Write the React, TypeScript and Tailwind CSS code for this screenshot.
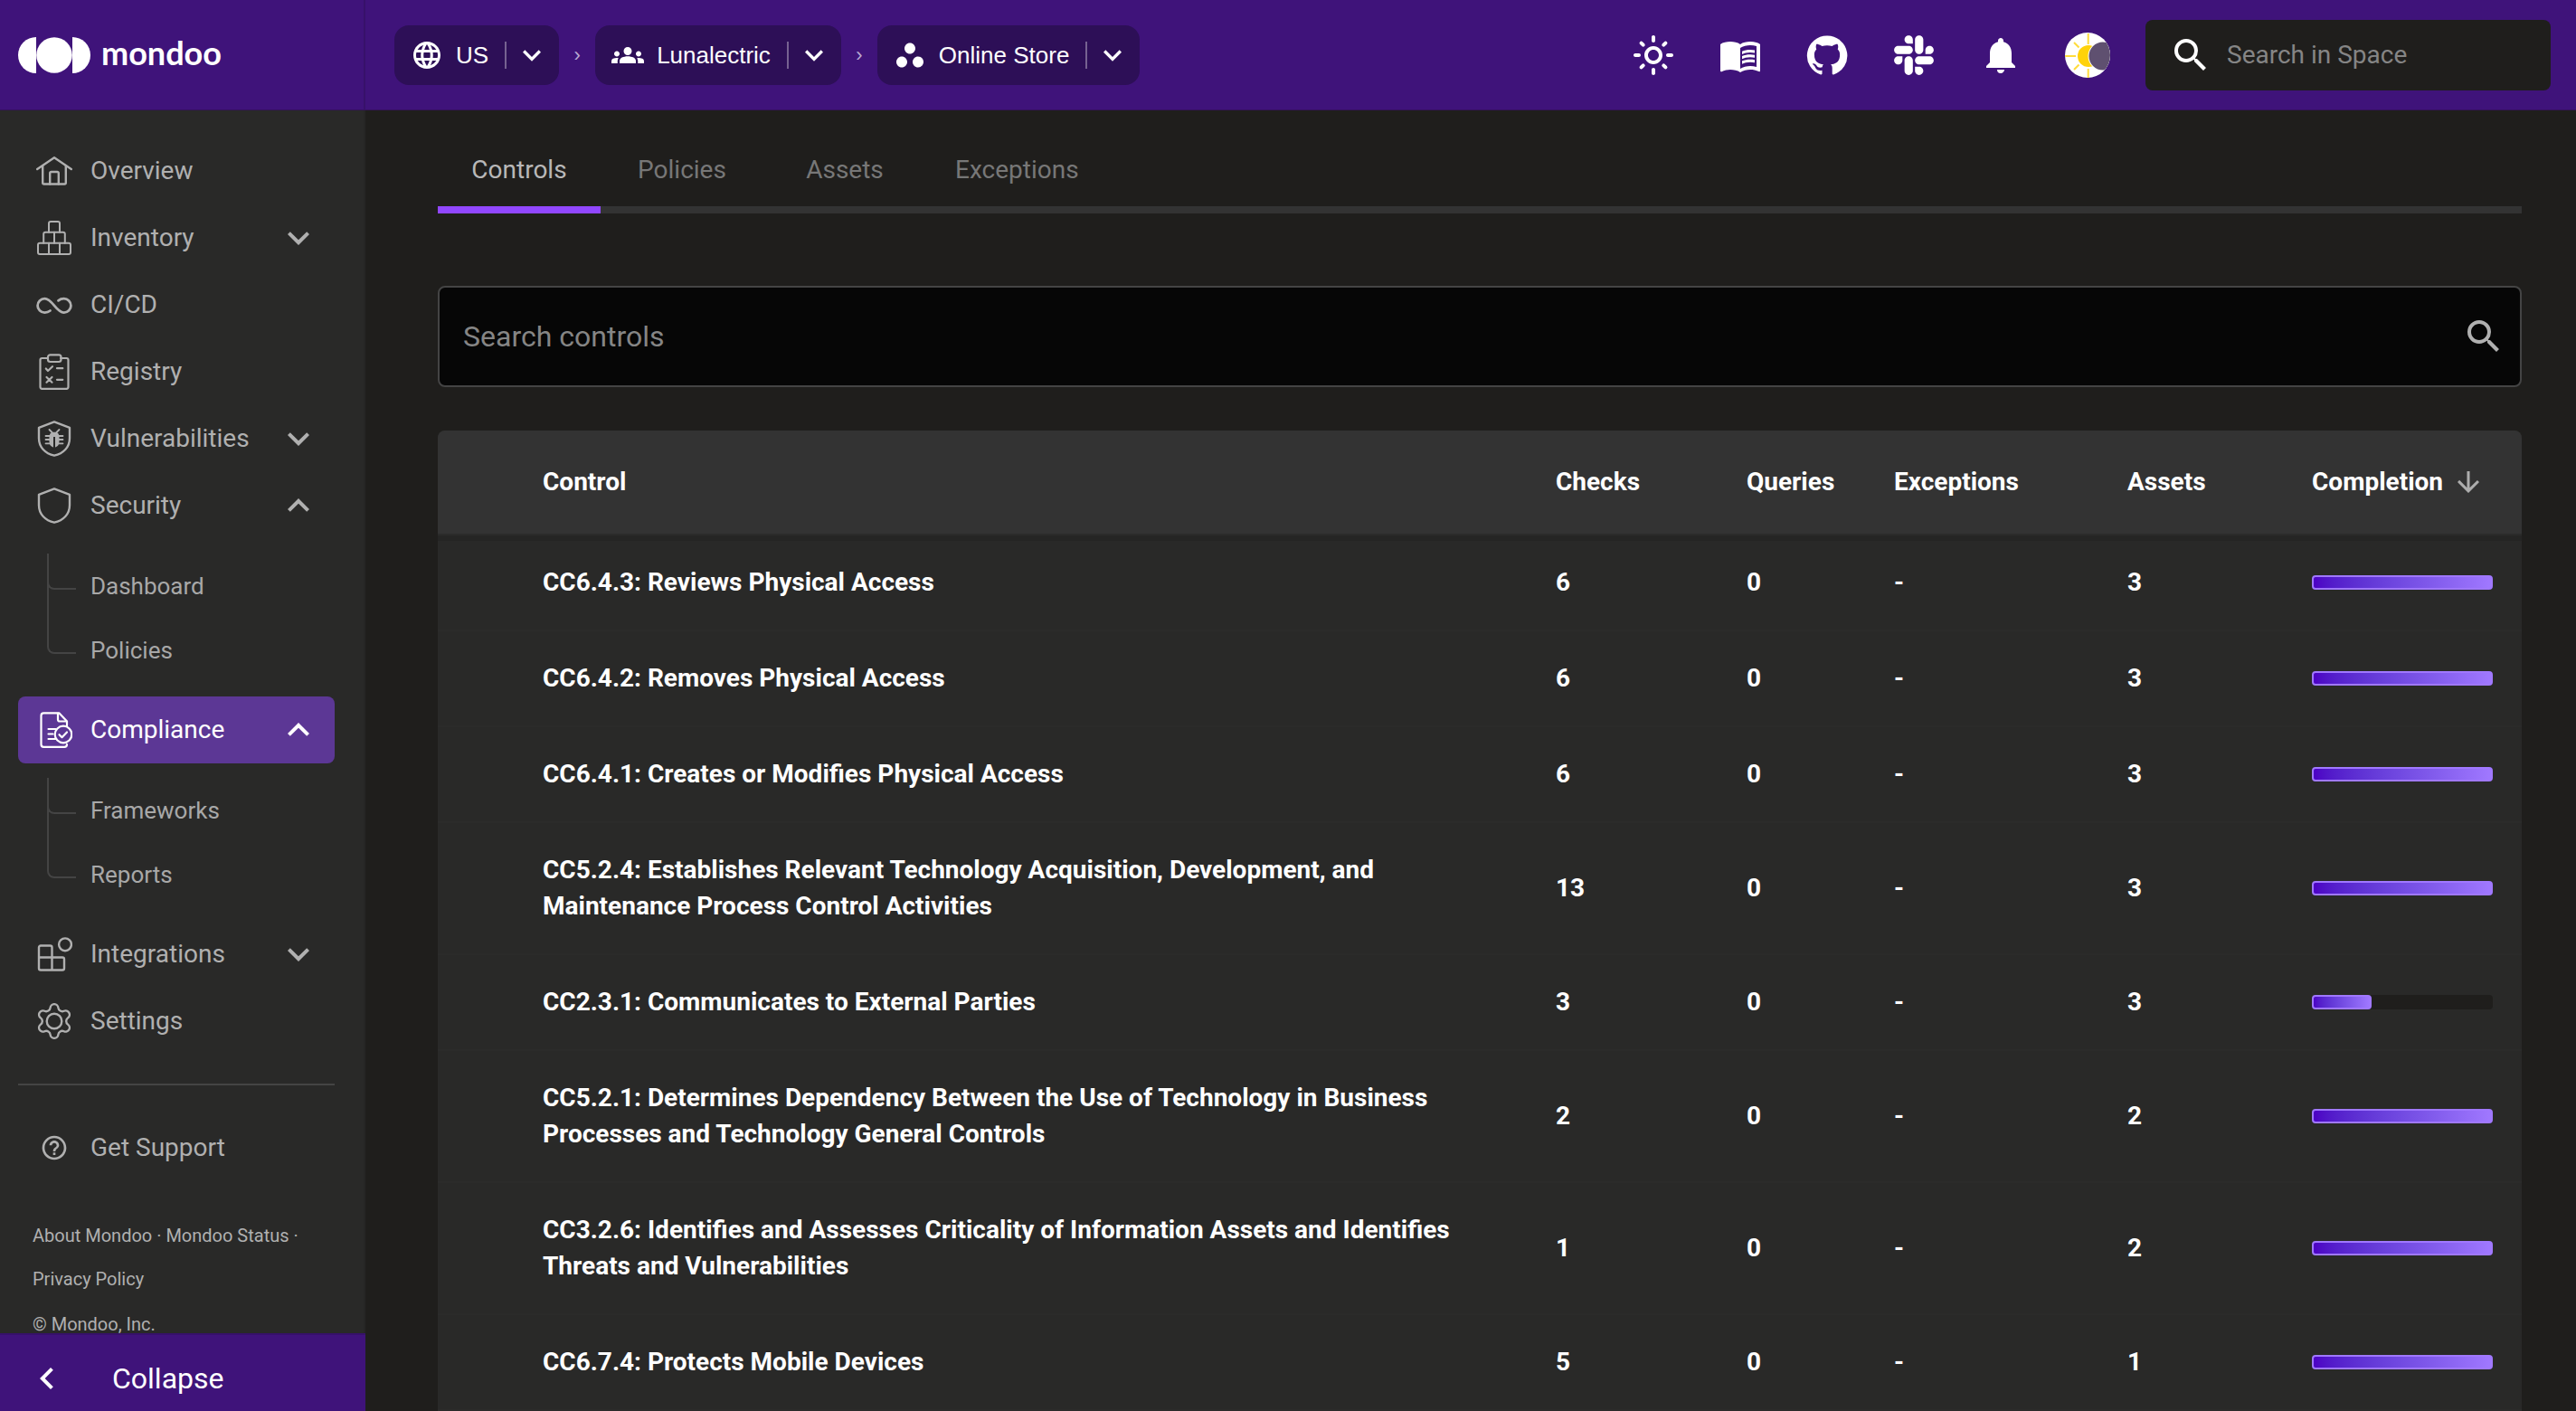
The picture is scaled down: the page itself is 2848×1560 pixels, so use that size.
import type { ReactNode } from "react";
import { FaSlack } from "react-icons/fa";
import {
  MdArrowDownward,
  MdChevronLeft,
  MdExpandLess,
  MdExpandMore,
  MdGroups,
  MdHelpOutline,
  MdLanguage,
  MdMenuBook,
  MdNotifications,
  MdOutlineLightMode,
  MdSearch,
  MdWorkspaces,
} from "react-icons/md";

/* ---------- drawings ---------- */

function LineIcon({ children, viewBox = "0 0 40 40", stroke = 2.4 }: { children: ReactNode; viewBox?: string; stroke?: number }) {
  return (
    <svg
      viewBox={viewBox}
      className="size-10 shrink-0"
      fill="none"
      stroke="currentColor"
      strokeWidth={stroke}
      strokeLinecap="round"
      strokeLinejoin="round"
      aria-hidden="true"
    >
      {children}
    </svg>
  );
}

const HomeIcon = () => (
  <LineIcon>
    <path d="M1.2 18 20 5.2 38.800 18" />
    <path d="M7.200 14.500V33a1.500 1.500 0 0 0 1.500 1.500h22.600a1.500 1.500 0 0 0 1.500-1.500V14.500" />
    <path d="M15.200 34.500V22.500a1.500 1.500 0 0 1 1.500-1.500h6.600a1.500 1.500 0 0 1 1.500 1.500v12" />
  </LineIcon>
);

const BoxesIcon = () => (
  <LineIcon stroke={2}>
    <path d="M14 13.700V4a2 2 0 0 1 2-2h8a2 2 0 0 1 2 2v9.700" />
    <path d="M8.200 25.700v-10a2 2 0 0 1 2-2h19.600a2 2 0 0 1 2 2v10" />
    <rect x="2" y="25.700" width="36" height="12.300" rx="2" />
    <path d="M20 13.700v12M14 25.700V38M26 25.700V38" />
  </LineIcon>
);

const InfinityIcon = () => (
  <LineIcon stroke={2.8}>
    <path d="M15.500 26.500C13.700 28 11.800 28.600 9.300 28.600a7.700 7.700 0 0 1 0-15.400C18 13.200 22 28.600 30.700 28.600a7.700 7.700 0 0 0 0-15.400c-2.500 0-4.400.6-6.200 2.100" />
  </LineIcon>
);

const ClipboardIcon = () => (
  <LineIcon stroke={2.2}>
    <path d="M13 5H6.500a2 2 0 0 0-2 2v29.800a2 2 0 0 0 2 2h27a2 2 0 0 0 2-2V7a2 2 0 0 0-2-2H27" />
    <rect x="13" y="1.300" width="14.500" height="7.700" rx="2.500" />
    <path d="m10.800 16.500 2.200 2.500 5-4.800M11.500 26l6 5.700M17.500 26l-6 5.700M23 16.200h6.300M23 28.800h6.300" />
  </LineIcon>
);

const SHIELD = "M20 1.400 37 7.800V19.500C37 29.500 30 36.500 20 38.700 10 36.500 3 29.500 3 19.500V7.800Z";

const ShieldIcon = () => (
  <LineIcon>
    <path d={SHIELD} />
  </LineIcon>
);

const ShieldBugIcon = () => (
  <LineIcon>
    <path d={SHIELD} />
    <path d="M15.500 14.500c1-2.500 8-2.500 9 0 1.500 2 1.500 11-.3 13-1 1.200-2.300 1.800-3.200 1.900V18h-2v11.400c-.9-.1-2.200-.7-3.200-1.900-1.800-2-1.800-11-.3-13Z" fill="currentColor" stroke="none" />
    <path d="m14.500 10 3 3M25.500 10l-3 3M10.500 17H16M24 17h5.500M10.500 21H16M24 21h5.500M10.500 25.300H16M24 25.300h5.500" strokeWidth={1.8} />
  </LineIcon>
);

const DocumentCheckIcon = () => (
  <LineIcon stroke={2.2}>
    <path d="M34 36c0 1.800-1 2.800-2.800 2.800H8.300a2.800 2.800 0 0 1-2.800-2.800V4.200a2.800 2.800 0 0 1 2.800-2.800H25.500L34 10.500V15.500" />
    <path d="M24 1.800V8.500a2 2 0 0 0 2 2h7.500" />
    <circle cx="30" cy="25" r="9.300" />
    <path d="m25.500 25.200 3 3 5.500-5.700M13.500 19h8M13.500 24.500h5M13.500 30h8" />
  </LineIcon>
);

const IntegrationsIcon = () => (
  <LineIcon>
    <path d="M17.500 23.500v-11a2 2 0 0 0-2-2H5a2 2 0 0 0-2 2V35.500a2 2 0 0 0 2 2H29a2 2 0 0 0 2-2V25.500a2 2 0 0 0-2-2H3M17.500 23.500v14" />
    <circle cx="32" cy="9.300" r="6.900" />
  </LineIcon>
);

const GearIcon = () => (
  <LineIcon viewBox="1.400 1.400 21.200 21.200" stroke={1.25}>
    <path d="M9.671 4.136a2.340 2.340 0 0 1 4.659 0 2.340 2.340 0 0 0 3.319 1.915 2.340 2.340 0 0 1 2.330 4.033 2.340 2.340 0 0 0 0 3.831 2.340 2.340 0 0 1-2.330 4.033 2.340 2.340 0 0 0-3.319 1.915 2.340 2.340 0 0 1-4.659 0 2.340 2.340 0 0 0-3.320-1.915 2.340 2.340 0 0 1-2.330-4.033 2.340 2.340 0 0 0 0-3.831A2.340 2.340 0 0 1 6.350 6.051a2.340 2.340 0 0 0 3.319-1.915" />
    <circle cx="12" cy="12" r="4.400" />
  </LineIcon>
);

const SupportIcon = () => (
  <span className="flex size-10 shrink-0 items-center justify-center">
    <MdHelpOutline className="size-8" />
  </span>
);

const GithubIcon = () => (
  <svg viewBox="0 0 24 24" className="size-12" fill="currentColor" aria-hidden="true">
    <path d="M12 1.270a11 11 0 00-3.480 21.460c.55.09.73-.28.73-.55v-1.840c-3.030.64-3.670-1.460-3.670-1.460-.55-1.290-1.280-1.650-1.280-1.650-.92-.65.1-.65.1-.65 1.100 0 1.730 1.100 1.730 1.100.92 1.650 2.570 1.200 3.210.92a2 2 0 01.64-1.470c-2.470-.27-5.040-1.190-5.040-5.500 0-1.100.46-2.100 1.200-2.840a3.760 3.760 0 010-2.930s.91-.28 3.110 1.100c1.800-.49 3.700-.49 5.500 0 2.100-1.380 3.020-1.100 3.020-1.100a3.760 3.760 0 01.1 2.930c.83.74 1.200 1.740 1.200 2.940 0 4.210-2.570 5.130-5.040 5.400.45.37.82.92.82 2.020v3.030c0 .27.1.64.73.55A11 11 0 0012 1.270" />
  </svg>
);

const Avatar = () => (
  <svg viewBox="0 0 50 50" className="size-[50px]" aria-hidden="true">
    <defs>
      <clipPath id="avatar-clip">
        <circle cx="25" cy="25" r="25" />
      </clipPath>
    </defs>
    <g clipPath="url(#avatar-clip)">
      <rect width="50" height="50" fill="#ffffff" />
      <circle cx="26" cy="26" r="12" fill="#ffd20a" />
      <path d="M25.700 1v12M25.700 40v10M0 26h12M10 11l5.500 5.500M10 41l5.500-5.500" stroke="#ffdc3c" strokeWidth="2" />
      <circle cx="41.500" cy="26" r="16" fill="#ffffff" />
      <circle cx="42" cy="26" r="15.500" fill="#5f5070" />
    </g>
  </svg>
);

const LogoMark = () => (
  <svg viewBox="0 0 80 40" className="h-10 w-20" fill="#ffffff" aria-hidden="true">
    <path d="M20 0a20 20 0 0 0 0 40Z" />
    <circle cx="40" cy="20" r="19.800" />
    <path d="M60 0a20 20 0 0 1 0 40Z" />
  </svg>
);

/* ---------- header ---------- */

function Crumb({ icon, label }: { icon: ReactNode; label: string }) {
  return (
    <div className="flex h-[66px] items-center rounded-2xl bg-[#2d0f57] pr-2.5 pl-[18px] text-white">
      <a href="#" className="flex items-center gap-3.5">
        {icon}
        <span>{label}</span>
      </a>
      <span className="ml-[18px] h-[30px] w-0.5 bg-white/35" />
      <button type="button" aria-label={`Switch ${label}`} className="ml-2">
        <MdExpandMore className="size-10" />
      </button>
    </div>
  );
}

const CrumbSeparator = () => <span className="w-10 text-center text-[22px] text-[#b9a9d2]">›</span>;

function HeaderButton({ label, children }: { label: string; children: ReactNode }) {
  return (
    <button type="button" aria-label={label} className="flex w-24 items-center justify-center text-white">
      {children}
    </button>
  );
}

function Header() {
  return (
    <header className="flex h-[122px] shrink-0 border-b border-[#35115f] bg-[#3f137a]">
      <a href="#" className="flex w-[404px] shrink-0 items-center gap-3 border-r-2 border-[#37116a] pl-5">
        <LogoMark />
        <span className="pb-1.5 font-[Lato] text-[36px] leading-10 font-bold text-white">mondoo</span>
      </a>
      <nav
        aria-label="Breadcrumb"
        className="flex items-center pl-8 font-['Liberation_Sans',sans-serif] text-[26px] leading-8"
      >
        <Crumb icon={<MdLanguage className="size-9" />} label="US" />
        <CrumbSeparator />
        <Crumb icon={<MdGroups className="size-9" />} label="Lunalectric" />
        <CrumbSeparator />
        <Crumb icon={<MdWorkspaces className="size-9" />} label="Online Store" />
      </nav>
      <div className="ml-auto flex items-center pr-7">
        <HeaderButton label="Theme">
          <MdOutlineLightMode className="size-12" />
        </HeaderButton>
        <HeaderButton label="Documentation">
          <MdMenuBook className="size-12" />
        </HeaderButton>
        <HeaderButton label="GitHub">
          <GithubIcon />
        </HeaderButton>
        <HeaderButton label="Slack">
          <FaSlack className="size-[50px]" />
        </HeaderButton>
        <HeaderButton label="Notifications">
          <MdNotifications className="size-12" />
        </HeaderButton>
        <HeaderButton label="Account">
          <Avatar />
        </HeaderButton>
        <label className="ml-4 flex h-[78px] w-[448px] items-center gap-4 rounded-lg bg-[#1f1e1c] pl-[26px]">
          <MdSearch className="size-12 shrink-0 text-white" />
          <input
            type="text"
            aria-label="Search in Space"
            placeholder="Search in Space"
            className="w-full bg-transparent text-[28px] leading-10 text-white outline-none placeholder:text-[#858585]"
          />
        </label>
      </div>
    </header>
  );
}

/* ---------- sidebar ---------- */

type Item = { label: string; icon: ReactNode; open?: boolean; active?: boolean; children?: string[] };

const items: Item[] = [
  { label: "Overview", icon: <HomeIcon /> },
  { label: "Inventory", icon: <BoxesIcon />, open: false },
  { label: "CI/CD", icon: <InfinityIcon /> },
  { label: "Registry", icon: <ClipboardIcon /> },
  { label: "Vulnerabilities", icon: <ShieldBugIcon />, open: false },
  { label: "Security", icon: <ShieldIcon />, open: true, children: ["Dashboard", "Policies"] },
  { label: "Compliance", icon: <DocumentCheckIcon />, open: true, active: true, children: ["Frameworks", "Reports"] },
  { label: "Integrations", icon: <IntegrationsIcon />, open: false },
  { label: "Settings", icon: <GearIcon /> },
];

function NavRow({ item }: { item: Item }) {
  const row = "flex h-[74px] w-full items-center gap-5 rounded-lg pr-4 pl-5 text-left text-[28px] leading-8";
  const tone = item.active ? "bg-[#5c3795] text-white" : "text-[#b0b0b0]";
  if (item.open === undefined) {
    return (
      <a href="#" className={`${row} ${tone}`}>
        {item.icon}
        {item.label}
      </a>
    );
  }
  return (
    <button type="button" aria-expanded={item.open} className={`${row} ${tone}`}>
      {item.icon}
      <span className="grow">{item.label}</span>
      {item.open ? <MdExpandLess className="size-12" /> : <MdExpandMore className="size-12" />}
    </button>
  );
}

function SubNav({ labels }: { labels: string[] }) {
  return (
    <ul className="py-4 pl-8">
      {labels.map((label) => (
        <li
          key={label}
          className="relative flex h-[71px] before:absolute before:inset-y-0 before:left-0 before:w-0.5 before:bg-[#444444] last:before:hidden"
        >
          <span className="h-10 w-8 rounded-bl-lg border-b-2 border-l-2 border-[#444444]" />
          <a href="#" className="ml-4 self-center text-[26px] leading-8 text-[#a8a8a8]">
            {label}
          </a>
        </li>
      ))}
    </ul>
  );
}

function Sidebar() {
  return (
    <aside className="flex w-[404px] shrink-0 flex-col bg-[#292928]">
      <div className="min-h-0 flex-1 overflow-hidden border-r-2 border-[#262625] pt-[30px] pr-8 pl-5">
        <nav aria-label="Main">
          <ul>
            {items.map((item) => (
              <li key={item.label}>
                <NavRow item={item} />
                {item.children && <SubNav labels={item.children} />}
              </li>
            ))}
          </ul>
        </nav>
        <hr className="my-8 border-t-2 border-[#444444]" />
        <NavRow item={{ label: "Get Support", icon: <SupportIcon /> }} />
        <footer className="mt-9 pl-4 text-[20px] leading-[48px] text-[#b0b0b0]">
          <a href="#">About Mondoo</a> · <a href="#">Mondoo Status</a> ·
          <br />
          <a href="#">Privacy Policy</a>
          <p className="mt-4 leading-5">© Mondoo, Inc.</p>
        </footer>
      </div>
      <button
        type="button"
        className="flex h-[86px] shrink-0 items-center gap-12 border-t-2 border-[#37116a] bg-[#3f137a] pt-3 pl-7 text-[32px] leading-10 text-white"
      >
        <MdChevronLeft className="size-12" />
        Collapse
      </button>
    </aside>
  );
}

/* ---------- content ---------- */

const tabs = ["Controls", "Policies", "Assets", "Exceptions"];

type Control = { name: string; checks: number; queries: number; assets: number; completion: number };

const controls: Control[] = [
  { name: "CC6.4.3: Reviews Physical Access", checks: 6, queries: 0, assets: 3, completion: 100 },
  { name: "CC6.4.2: Removes Physical Access", checks: 6, queries: 0, assets: 3, completion: 100 },
  { name: "CC6.4.1: Creates or Modifies Physical Access", checks: 6, queries: 0, assets: 3, completion: 100 },
  {
    name: "CC5.2.4: Establishes Relevant Technology Acquisition, Development, and Maintenance Process Control Activities",
    checks: 13,
    queries: 0,
    assets: 3,
    completion: 100,
  },
  { name: "CC2.3.1: Communicates to External Parties", checks: 3, queries: 0, assets: 3, completion: 33 },
  {
    name: "CC5.2.1: Determines Dependency Between the Use of Technology in Business Processes and Technology General Controls",
    checks: 2,
    queries: 0,
    assets: 2,
    completion: 100,
  },
  {
    name: "CC3.2.6: Identifies and Assesses Criticality of Information Assets and Identifies Threats and Vulnerabilities",
    checks: 1,
    queries: 0,
    assets: 2,
    completion: 100,
  },
  { name: "CC6.7.4: Protects Mobile Devices", checks: 5, queries: 0, assets: 1, completion: 100 },
];

function Tabs() {
  return (
    <div role="tablist" className="flex h-24 border-b-8 border-[#333333] text-[28px] leading-8">
      {tabs.map((tab, i) => (
        <button
          key={tab}
          type="button"
          role="tab"
          aria-selected={i === 0}
          className={
            i === 0
              ? "-mb-2 min-w-[180px] border-b-8 border-[#9147ff] px-8 pt-2 text-[#b8b8b8]"
              : "-mb-2 min-w-[180px] px-8 text-[#777777]"
          }
        >
          {tab}
        </button>
      ))}
    </div>
  );
}

function ControlsTable() {
  return (
    <table className="mt-12 w-full table-fixed border-separate border-spacing-0 rounded-t-lg bg-[#292928] text-left text-[28px] leading-10 font-bold text-white">
      <colgroup>
        <col />
        <col className="w-[211px]" />
        <col className="w-[163px]" />
        <col className="w-[258px]" />
        <col className="w-[204px]" />
        <col className="w-[264px]" />
      </colgroup>
      <thead>
        <tr className="h-[116px] shadow-[0_6px_0_rgba(0,0,0,0.08)] [&>th]:border-b-2 [&>th]:border-[#2b2b2a] [&>th]:bg-[#333333] [&>th]:bg-clip-padding [&>th]:px-8">
          <th scope="col" className="rounded-tl-lg">
            <span className="pl-[84px]">Control</span>
          </th>
          <th scope="col">Checks</th>
          <th scope="col">Queries</th>
          <th scope="col">Exceptions</th>
          <th scope="col">Assets</th>
          <th scope="col" className="rounded-tr-lg" aria-sort="descending">
            <button type="button" className="flex items-center gap-2.5">
              Completion
              <MdArrowDownward className="size-9 text-[#adadad]" />
            </button>
          </th>
        </tr>
      </thead>
      <tbody>
        {controls.map((c) => (
          <tr key={c.name} className="[&>td]:border-b-2 [&>td]:border-[#2b2b2a] [&>td]:px-8 [&>td]:py-8">
            <td>
              <div className="pl-[84px]">{c.name}</div>
            </td>
            <td>{c.checks}</td>
            <td>{c.queries}</td>
            <td>-</td>
            <td>{c.assets}</td>
            <td>
              <div
                role="progressbar"
                aria-label="Completion"
                aria-valuenow={c.completion}
                className="h-4 rounded bg-[#1f1e1c]"
              >
                <div
                  className="h-full rounded border-2 border-[#a078ff] bg-linear-to-r from-[#4c00c4] to-[#a078ff]"
                  style={{ width: `${c.completion}%` }}
                />
              </div>
            </td>
          </tr>
        ))}
      </tbody>
    </table>
  );
}

export default function App() {
  return (
    <div className="flex h-screen flex-col overflow-hidden bg-[#1f1e1c] font-[Roboto,sans-serif]">
      <Header />
      <div className="flex min-h-0 flex-1">
        <Sidebar />
        <main className="min-w-0 flex-1 overflow-hidden pt-[18px] pr-[60px] pl-20">
          <Tabs />
          <label className="mt-20 flex h-28 items-center rounded-lg border-2 border-[#444444] bg-[#060606] pr-4 pl-[26px]">
            <input
              type="text"
              aria-label="Search controls"
              placeholder="Search controls"
              className="min-w-0 flex-1 bg-transparent text-[32px] leading-10 text-white outline-none placeholder:text-[#858585]"
            />
            <MdSearch className="size-12 shrink-0 text-[#b0b0b0]" />
          </label>
          <ControlsTable />
        </main>
      </div>
    </div>
  );
}
